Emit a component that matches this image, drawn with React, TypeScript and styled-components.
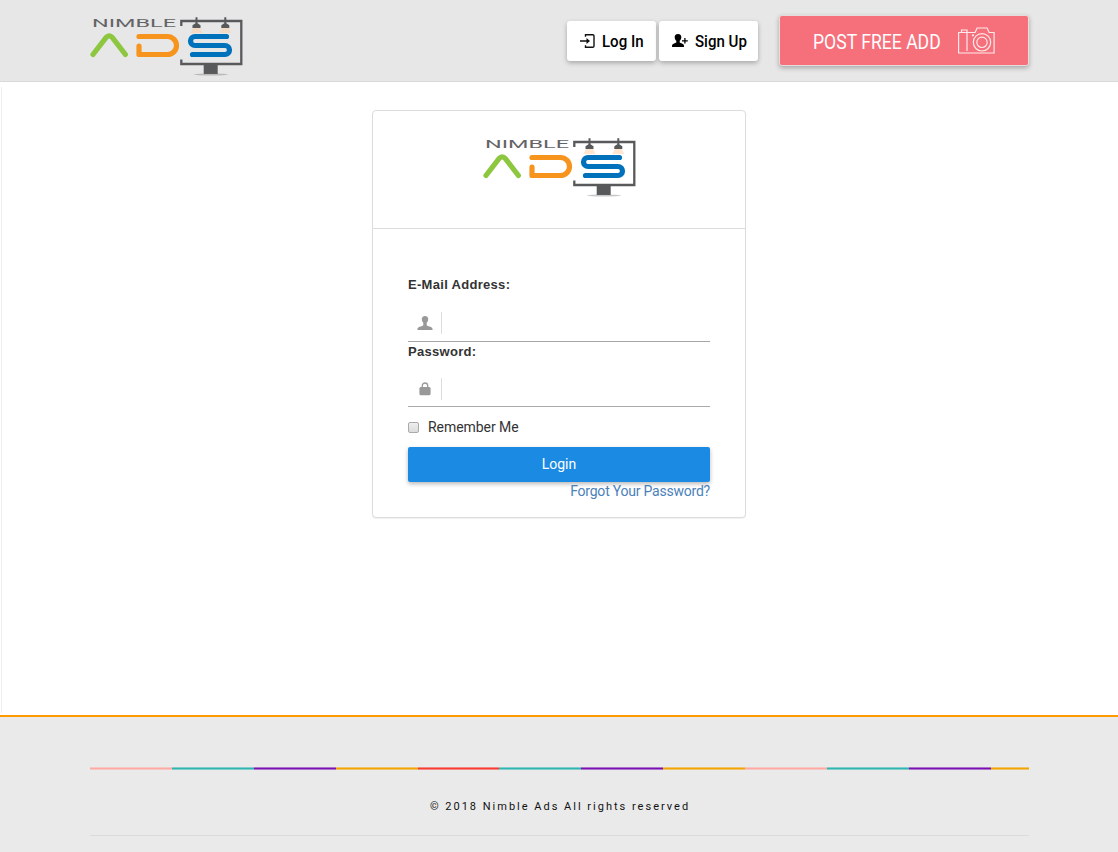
import React from "react";
import styled, { createGlobalStyle } from "styled-components";

const Global = createGlobalStyle`
  * { box-sizing: border-box; }
  body { margin: 0; background: #fff; font-family: Roboto, "Liberation Sans", sans-serif; color: #333; }
`;

const Page = styled.div`
  display: flex;
  flex-direction: column;
  height: 852px;
  overflow: hidden;
`;

const Header = styled.header`
  display: flex;
  align-items: flex-start;
  height: 82px;
  padding: 16px 90px 0 89.5px;
  background: #e7e7e7;
  border-bottom: 1px solid #d8d8d8;
`;

const Actions = styled.nav`
  display: flex;
  margin-left: auto;
`;

const NavButton = styled.a<{ $width: number }>`
  display: flex;
  align-items: center;
  justify-content: center;
  gap: 7px;
  width: ${(p) => p.$width}px;
  height: 40px;
  margin: 5px 3px 0 0;
  border-radius: 3px;
  background: #fff;
  color: #000;
  font-size: 16px;
  font-weight: 500;
  white-space: nowrap;
  box-shadow: 0 2px 5px rgba(0, 0, 0, 0.28);
`;

const NavText = styled.span<{ $scale: number; $width: number }>`
  width: ${(p) => p.$width}px;
  transform: scaleX(${(p) => p.$scale});
  transform-origin: left center;
`;

const PostButton = styled.a`
  display: flex;
  align-items: center;
  width: 250px;
  height: 51px;
  margin: -1px -1px 0 18px;
  padding: 1px 0 0 33px;
  border: 1px solid #e6dcdc;
  border-radius: 3px;
  background: #f6707b;
  color: #fff;
  font-size: 20px;
  box-shadow: 0 2px 5px rgba(0, 0, 0, 0.28);
`;

const Condensed = styled.span`
  width: 145px;
  padding-top: 1px;
  white-space: nowrap;
  transform: scaleX(0.88);
  transform-origin: left center;
`;

const Main = styled.main`
  flex: 1;
  display: flex;
  justify-content: center;
  align-items: flex-start;
  margin: 5px 1px 2px 1px;
  padding-top: 23px;
  border-left: 1px solid #eee;
`;

const Card = styled.section`
  width: 374px;
  height: 408px;
  margin-right: 1px;
  border: 1px solid #dcdcdc;
  border-radius: 4px;
  background: #fff;
  box-shadow: 0 1px 1px rgba(0, 0, 0, 0.06);
`;

const CardHead = styled.div`
  display: flex;
  height: 118px;
  padding: 26px 0 0 110px;
  border-bottom: 1px solid #ddd;
`;

const Form = styled.form`
  display: flex;
  flex-direction: column;
  padding: 46px 35px 0;
  font-size: 14px;
`;

const Label = styled.label`
  height: 20px;
  line-height: 20px;
  font-family: "Liberation Sans", Arial, sans-serif;
  font-size: 13px;
  font-weight: 700;
  letter-spacing: 0.3px;
`;

const Field = styled.div<{ $line: string; $height: number }>`
  display: flex;
  align-items: center;
  height: ${(p) => p.$height}px;
  padding-top: 10px;
  border-bottom: 1px solid ${(p) => p.$line};
`;

const FieldIcon = styled.span`
  display: flex;
  align-items: center;
  justify-content: center;
  width: 34px;
  height: 22px;
  border-right: 1px solid #ddd;
`;

const Input = styled.input`
  flex: 1;
  min-width: 0;
  border: 0;
  outline: 0;
  background: transparent;
`;

const Remember = styled.div`
  display: flex;
  align-items: center;
  gap: 9px;
  height: 40px;
  letter-spacing: -0.05px;
`;

const CheckBox = styled.span`
  width: 11px;
  height: 11px;
  border: 1px solid #aaa;
  border-radius: 2px;
  background: linear-gradient(#eee, #dcdcdc);
`;

const Submit = styled.button`
  height: 35px;
  padding: 0 0 2px;
  border: 0;
  border-radius: 2px;
  background: #1a8ae3;
  color: #fff;
  font: 14px Roboto, sans-serif;
  box-shadow: 0 2px 4px rgba(0, 0, 0, 0.28);
`;

const Forgot = styled.a`
  align-self: flex-end;
  line-height: 19px;
  color: #4a81ba;
  letter-spacing: -0.22px;
  white-space: nowrap;
`;

const Footer = styled.footer`
  height: 137px;
  padding: 50px 89px 0 90px;
  border-top: 2px solid #ff9b00;
  background: #eaeaea;
`;

const Stripes = styled.div`
  display: flex;
  height: 3px;
  overflow: hidden;
`;

const Stripe = styled.span<{ $color: string }>`
  flex: 0 0 81.9px;
  background: ${(p) => p.$color};
  border: solid rgba(234, 234, 234, 0.45);
  border-width: 1px 0;
`;

const Copyright = styled.p`
  margin: 0;
  height: 66px;
  padding: 28px 0 0 1px;
  border-bottom: 1px solid #dbdbdb;
  color: #111;
  font-size: 11px;
  line-height: 18px;
  letter-spacing: 2px;
  text-align: center;
`;

const LogoSvg = styled.svg`
  display: block;
  flex: none;
`;

const stripeColors = [
  "#ffa9a3", "#2eb5b0", "#7a12b3", "#f2a500", "#f93a30", "#2eb5b0",
  "#7a12b3", "#f2a500", "#ffa9a3", "#2eb5b0", "#7a12b3", "#f2a500",
];

function Lamp({ x }: { x: number }) {
  return (
    <g>
      <path d={`M${x - 3.5} 12h7l2.500 5h-12z`} fill="#fbcfa8" opacity="0.55" />
      <path d={`M${x - 1} 1.200h2v6l3 2v2.800h-8v-2.800l3-2z`} fill="#58595b" />
    </g>
  );
}

function Logo() {
  return (
    <LogoSvg width="153" height="60" viewBox="0 0 153 60" fill="none" role="img" aria-label="Nimble Ads">
      <text x="2" y="11.3" textLength="84" lengthAdjust="spacingAndGlyphs" fontFamily="Roboto, sans-serif" fontSize="10.5" fill="#636466">NIMBLE</text>
      <path d="M91.300 10V5h60v43h-60v-4.500" stroke="#58595b" strokeWidth="2.300" />
      <path d="M113.700 49h14v9h-14z" fill="#58595b" />
      <ellipse cx="121" cy="58.500" rx="17" ry="0.900" fill="#77787b" opacity="0.400" />
      <Lamp x={106.5} />
      <Lamp x={135.3} />
      <g strokeWidth="5.200" strokeLinecap="round" strokeLinejoin="round">
        <path d="M3 38.500 15.800 21.800q3.400-3.800 6.800 0l12.800 16.700" stroke="#8dc63f" />
        <path d="M49 20.500h28.500a9 9 0 0 1 0 18H49V30" stroke="#f7941e" />
        <path d="M136.500 20.500H105a4.500 4.500 0 0 0 0 9h30a4.500 4.500 0 0 1 0 9H102.500" stroke="#0072bc" />
      </g>
    </LogoSvg>
  );
}

const EnterIcon = () => (
  <svg width="15" height="14" viewBox="0 0 15 14" fill="none" stroke="#111" strokeWidth="1.4">
    <path d="M5.500 2.800V.8h7.200q1.300 0 1.300 1.300v9.800q0 1.300-1.300 1.300H5.500v-2M0 7h8.500" />
    <path d="M6.500 4 10 7l-3.500 3z" fill="#111" stroke="none" />
  </svg>
);

const AddUserIcon = () => (
  <svg width="16" height="14" viewBox="0 0 16 14" fill="#000">
    <path d="M6 0c2.300 0 3.500 1.400 3.300 3.400-.1 1.600-.8 2.600-1.600 3.400v1.600l3.300 1.700c.8.500 1 1.300 1 2.900H0c0-1.600.2-2.400 1-2.900l3.300-1.700V6.800C3.500 6 2.800 5 2.700 3.400 2.500 1.400 3.700 0 6 0z" />
    <path d="M10 6.800h5.800M12.900 4v5.600" stroke="#000" strokeWidth="1.300" />
  </svg>
);

const CameraIcon = () => (
  <svg width="37" height="28" viewBox="0 0 37 28" fill="none" stroke="#fff" strokeWidth="1.2" opacity="0.85">
    <path d="M.6 5.500h16.500l2-4.500h10l2 4.500h5v20.500H.6z" />
    <path d="M3.500 5.500V3H9v2.500M9 5.500V24" />
    <circle cx="24" cy="15.300" r="8.700" />
    <circle cx="24" cy="15.300" r="5.200" />
    <circle cx="15" cy="8.300" r="0.500" />
  </svg>
);

const UserIcon = () => (
  <svg width="16" height="15" viewBox="0 0 16 15" fill="#999">
    <path d="M8 0c2.100 0 3.300 1.300 3.200 3.300-.1 1.800-.8 2.700-1.500 3.500v1.900c0 1 1 1.300 2.900 1.900 2.200.7 3 1.300 3 3.400H.4c0-2.100.8-2.700 3-3.400 1.900-.6 2.900-.9 2.900-1.900V6.800C5.600 6 4.900 5.100 4.800 3.300 4.700 1.300 5.900 0 8 0z" />
  </svg>
);

const LockIcon = () => (
  <svg width="14" height="14" viewBox="0 0 14 14">
    <rect x="1.400" y="5" width="11.200" height="8.300" rx="1.500" fill="#999" />
    <path d="M4.300 5.500V3.700a2.700 2.700 0 0 1 5.400 0v1.800" fill="none" stroke="#999" strokeWidth="1.300" />
  </svg>
);

export default function App() {
  return (
    <Page>
      <Global />
      <Header>
        <Logo />
        <Actions>
          <NavButton $width={89}><EnterIcon /><NavText $scale={0.94} $width={41}>Log In</NavText></NavButton>
          <NavButton $width={99}><AddUserIcon /><NavText $scale={0.94} $width={51}>Sign Up</NavText></NavButton>
          <PostButton><Condensed>POST FREE ADD</Condensed><CameraIcon /></PostButton>
        </Actions>
      </Header>
      <Main>
        <Card>
          <CardHead><Logo /></CardHead>
          <Form>
            <Label htmlFor="email">E-Mail Address:</Label>
            <Field $line="#a3a8a6" $height={47}><FieldIcon><UserIcon /></FieldIcon><Input id="email" /></Field>
            <Label htmlFor="password">Password:</Label>
            <Field $line="#aaa" $height={45}><FieldIcon><LockIcon /></FieldIcon><Input id="password" type="password" /></Field>
            <Remember><CheckBox />Remember Me</Remember>
            <Submit type="button">Login</Submit>
            <Forgot>Forgot Your Password?</Forgot>
          </Form>
        </Card>
      </Main>
      <Footer>
        <Stripes>{stripeColors.map((color, i) => <Stripe key={i} $color={color} />)}</Stripes>
        <Copyright>© 2018 Nimble Ads All rights reserved</Copyright>
      </Footer>
    </Page>
  );
}
